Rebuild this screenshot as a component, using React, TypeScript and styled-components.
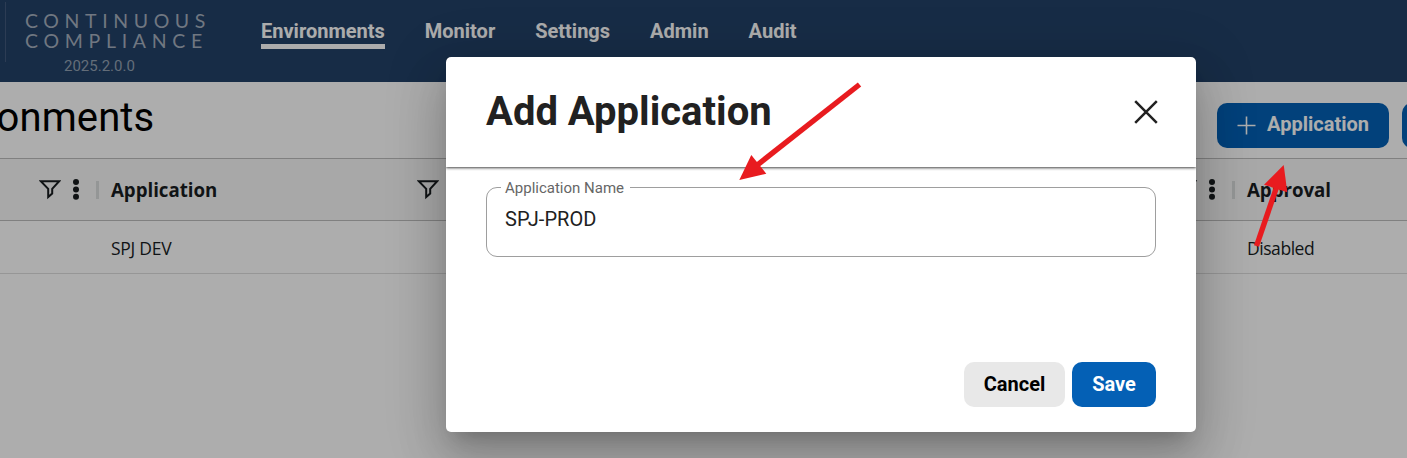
import React from "react";
import styled, { createGlobalStyle } from "styled-components";

const GlobalStyle = createGlobalStyle`
  * { box-sizing: border-box; }
  body { margin: 0; background: #fff; overflow: hidden; font-family: Roboto, sans-serif; }
  button { font-family: inherit; }
`;

const Page = styled.div`
  position: relative;
  width: 1407px;
  height: 458px;
  overflow: hidden;
  background: #ffffff;
`;

const Header = styled.header`
  display: flex;
  align-items: flex-start;
  height: 82px;
  padding-left: 5px;
  background: #234168;
`;

const Brand = styled.div`
  width: 256px;
  height: 60px;
  margin-top: 2px;
  padding: 9px 0 0 19px;
  border-left: 1px solid #42597c;
`;

const BrandLine = styled.div<{ $spacing: number }>`
  height: 20px;
  font-family: Lato, sans-serif;
  font-weight: 400;
  font-size: 19.5px;
  line-height: 20px;
  letter-spacing: ${(p) => p.$spacing}px;
  white-space: nowrap;
  color: #a5b0be;
`;

const Version = styled.div`
  padding: 6px 0 0 39px;
  font-size: 15px;
  line-height: 18px;
  color: #93a1b3;
`;

const Nav = styled.nav`
  display: flex;
  gap: 40px;
  margin-top: 16px;
`;

const NavItem = styled.a<{ $active?: boolean }>`
  height: 33px;
  padding-top: 1px;
  font-size: 20px;
  font-weight: 700;
  line-height: 29px;
  color: #fefefe;
  border-bottom: 5px solid ${(p) => (p.$active ? "#fefefe" : "transparent")};
`;

const TitleBar = styled.div`
  display: flex;
  justify-content: space-between;
  height: 77px;
  border-bottom: 1px solid #bdbdbd;
`;

const PageTitle = styled.h1`
  margin: 0 0 0 -91px;
  font-size: 40px;
  font-weight: 400;
  letter-spacing: 0.1px;
  line-height: 72px;
  color: #000;
`;

const Actions = styled.div`
  display: flex;
  flex: none;
  gap: 13px;
  width: 190px;
  padding-top: 21px;
  overflow: hidden;
`;

const Button = styled.button<{ $tone: "primary" | "neutral"; $width: number }>`
  display: flex;
  flex: none;
  align-items: center;
  justify-content: center;
  gap: 11px;
  width: ${(p) => p.$width}px;
  height: 45px;
  padding: 0;
  border: 0;
  border-radius: 10px;
  font-size: 20px;
  font-weight: 700;
  color: ${(p) => (p.$tone === "primary" ? "#fff" : "#000")};
  background: ${(p) => (p.$tone === "primary" ? "#0460b5" : "#e8e8e8")};
`;

const ButtonLabel = styled.span<{ $lift: number }>`
  padding-bottom: ${(p) => p.$lift * 2}px;
`;

const Row = styled.div<{ $head?: boolean }>`
  display: grid;
  grid-template-columns: 97px 1136px 174px;
  align-items: center;
  height: ${(p) => (p.$head ? 62 : 53)}px;
  background: ${(p) => (p.$head ? "#f8f8f8" : "#fff")};
  border-bottom: 1px solid ${(p) => (p.$head ? "#bdbdbd" : "#dedede")};
`;

const Cell = styled.div`
  display: flex;
  align-items: center;
  min-width: 0;
`;

const Tools = styled.div<{ $right: number }>`
  display: flex;
  align-items: center;
  gap: 11px;
  margin-left: auto;
  padding-right: ${(p) => p.$right}px;
`;

const Divider = styled.span`
  width: 3px;
  height: 18px;
  margin: 0 12px 0 -1px;
  background: #dadddd;
`;

const HeadLabel = styled.span<{ $width?: number }>`
  width: ${(p) => (p.$width ? `${p.$width}px` : "auto")};
  font-family: "Open Sans", sans-serif;
  font-size: 18.7px;
  font-weight: 700;
  letter-spacing: -0.03px;
  color: #181d1f;
`;

const CellText = styled.span<{ $spacing: number }>`
  padding: 2px 0 0 14px;
  font-family: "Open Sans", sans-serif;
  font-size: 17.5px;
  letter-spacing: ${(p) => p.$spacing}px;
  color: #181d1f;
`;

const Scrim = styled.div`
  position: absolute;
  inset: 0;
  display: flex;
  align-items: flex-start;
  padding: 57px 0 0 446px;
  background: rgba(0, 0, 0, 0.32);
`;

const Dialog = styled.section`
  display: flex;
  flex-direction: column;
  width: 750px;
  height: 375px;
  border-radius: 5px;
  background: #fff;
  box-shadow:
    0 13.75px 18.75px -8.75px rgba(0, 0, 0, 0.2),
    0 30px 47.5px 3.75px rgba(0, 0, 0, 0.14),
    0 11.25px 57.5px 10px rgba(0, 0, 0, 0.12);
`;

const DialogHeader = styled.div`
  display: flex;
  flex: none;
  justify-content: space-between;
  height: 110px;
  padding: 0 38px 0 40px;
  border-radius: 5px 5px 0 0;
  box-shadow: 0 1px 3px rgba(0, 0, 0, 0.75);
  clip-path: inset(0 0 -8px 0);
`;

const DialogTitle = styled.h2`
  margin: 0;
  font-size: 40px;
  font-weight: 700;
  line-height: 110px;
  color: #212121;
`;

const CloseIcon = styled.svg`
  margin-top: 43px;
`;

const Field = styled.fieldset`
  width: 670px;
  height: 81px;
  margin: 9px 40px 0;
  padding: 0 18px;
  border: 1px solid #9e9e9e;
  border-radius: 11px;
`;

const FieldLabel = styled.legend`
  margin-left: -4px;
  padding: 2px 6px 0 4px;
  font-size: 15px;
  line-height: 20px;
  color: #666;
`;

const FieldInput = styled.input`
  width: 100%;
  height: 24px;
  margin-top: 9px;
  padding: 0;
  border: 0;
  outline: 0;
  background: transparent;
  font-family: Roboto, sans-serif;
  font-size: 20px;
  letter-spacing: 0.08px;
  color: #212121;
`;

const DialogActions = styled.div`
  display: flex;
  justify-content: flex-end;
  gap: 7px;
  margin-top: auto;
  padding: 0 40px 25px;
`;

const Annotations = styled.svg`
  position: absolute;
  inset: 0;
`;

const FilterIcon = () => (
  <svg width="22" height="20" viewBox="0 0 22 20" fill="none" stroke="#181d1f" strokeWidth="2">
    <path d="M1.8 1.2H20.2L13.2 8.8V13.5L9.2 17V8.8Z" />
  </svg>
);

const MenuIcon = () => (
  <svg width="8" height="22" viewBox="0 0 8 22" fill="#181d1f">
    <circle cx="4" cy="3" r="3" />
    <circle cx="4" cy="10.4" r="3" />
    <circle cx="4" cy="17.8" r="3" />
  </svg>
);

const PlusIcon = () => (
  <svg width="19" height="19" viewBox="0 0 19 19" stroke="#fff" strokeWidth="1.6">
    <path d="M9.5 .5v18M.5 9.5h18" />
  </svg>
);

export default function App() {
  return (
    <Page>
      <GlobalStyle />
      <Header>
        <Brand>
          <BrandLine $spacing={5.6}>CONTINUOUS</BrandLine>
          <BrandLine $spacing={5.7}>COMPLIANCE</BrandLine>
          <Version>2025.2.0.0</Version>
        </Brand>
        <Nav>
          <NavItem $active>Environments</NavItem>
          <NavItem>Monitor</NavItem>
          <NavItem>Settings</NavItem>
          <NavItem>Admin</NavItem>
          <NavItem>Audit</NavItem>
        </Nav>
      </Header>
      <TitleBar>
        <PageTitle>Environments</PageTitle>
        <Actions>
          <Button $tone="primary" $width={172}>
            <PlusIcon />
            <ButtonLabel $lift={2}>Application</ButtonLabel>
          </Button>
          <Button $tone="primary" $width={172} aria-label="Environment" />
        </Actions>
      </TitleBar>
      <Row $head>
        <Cell><Tools $right={17}><FilterIcon /><MenuIcon /></Tools></Cell>
        <Cell>
          <Divider />
          <HeadLabel $width={306}>Application</HeadLabel>
          <FilterIcon />
          <Tools $right={17}><FilterIcon /><MenuIcon /></Tools>
        </Cell>
        <Cell><Divider /><HeadLabel>Approval</HeadLabel></Cell>
      </Row>
      <Row>
        <Cell />
        <Cell><CellText $spacing={-0.25}>SPJ DEV</CellText></Cell>
        <Cell><CellText $spacing={-0.45}>Disabled</CellText></Cell>
      </Row>
      <Scrim>
        <Dialog role="dialog" aria-label="Add Application">
          <DialogHeader>
            <DialogTitle>Add Application</DialogTitle>
            <CloseIcon width="24" height="24" viewBox="0 0 24 24" stroke="#212121" strokeWidth="2.5">
              <path d="M1.2 1.2L22.8 22.8M22.8 1.2L1.2 22.8" />
            </CloseIcon>
          </DialogHeader>
          <Field>
            <FieldLabel>Application Name</FieldLabel>
            <FieldInput defaultValue="SPJ-PROD" aria-label="Application Name" />
          </Field>
          <DialogActions>
            <Button $tone="neutral" $width={101}><ButtonLabel $lift={1}>Cancel</ButtonLabel></Button>
            <Button $tone="primary" $width={84}><ButtonLabel $lift={1}>Save</ButtonLabel></Button>
          </DialogActions>
        </Dialog>
      </Scrim>
      <Annotations width="1407" height="458" viewBox="0 0 1407 458" fill="#e81b1f" stroke="#e81b1f" strokeWidth="5.4">
        <path d="M859.5 84.5L756 166" />
        <path d="M739.3 180L751.3 155L766.3 173.7Z" stroke="none" />
        <path d="M1256.5 246L1277 186" />
        <path d="M1283.7 165L1264 184.7L1287.3 192.3Z" stroke="none" />
      </Annotations>
    </Page>
  );
}
